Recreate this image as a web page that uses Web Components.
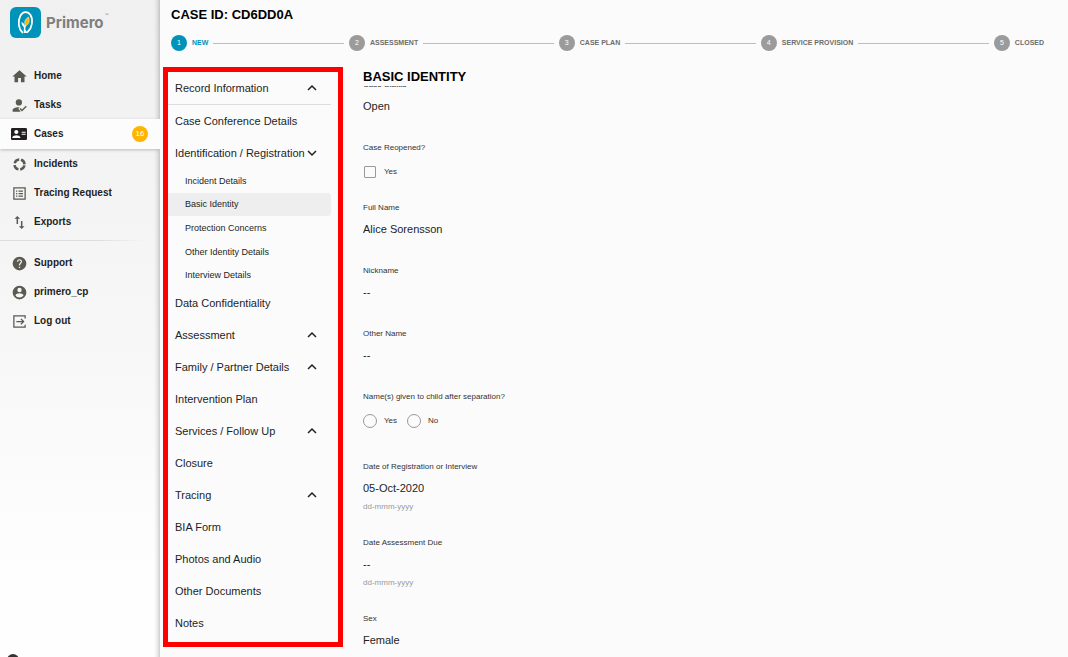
<!DOCTYPE html>
<html lang="en">
<head>
<meta charset="utf-8">
<meta name="viewport" content="width=device-width, initial-scale=1">
<title>Primero - Case CD6DD0A</title>
<style>
  body { margin: 0; background: #fbfbfb; color: #231e1f; font-family: "Liberation Sans", Arial, Helvetica, sans-serif; font-size: 11px; }
</style>
</head>
<body>
<primero-app></primero-app>

<script>
function define(name, html, setup) {
  const template = document.createElement('template');
  template.innerHTML = html;
  customElements.define(name, class extends HTMLElement {
    constructor() {
      super();
      this.attachShadow({ mode: 'open' }).append(template.content.cloneNode(true));
    }
    connectedCallback() { if (setup) setup(this, this.shadowRoot); }
  });
}

const icons = {
  home: '<path d="M9.700 21v-6.500h4.600V21H20v-9h3.500L12 1.800.5 12H4v9z"/>',
  tasks: '<circle cx="11" cy="7" r="5"/><path d="M13 20.5l-3-3 2-2.6C7 14.300 1 16.500 1 19v3h12.500zM22 12.500l-6 6-2.500-2.500-1.600 1.600 4.100 4.100 7.600-7.600z"/>',
  cases: '<path fill-rule="evenodd" d="M22 3H2C.9 3 0 3.900 0 5v14c0 1.100.9 2 2 2h20c1.100 0 2-.9 2-2V5c0-1.100-.9-2-2-2zM8 6c1.700 0 3 1.300 3 3s-1.300 3-3 3-3-1.300-3-3 1.300-3 3-3zm6 12H2v-1c0-2 4-3.100 6-3.100s6 1.100 6 3.100v1zm8-5h-6v-1.500h6V13zm0-3h-6V8.500h6V10z"/>',
  incidents: '<circle cx="12" cy="12" r="8" fill="none" stroke="currentColor" stroke-width="4" stroke-dasharray="9.570 3" stroke-dashoffset="-1.500"/>',
  tracing: '<path fill-rule="evenodd" d="M2 2h20v20H2zM4 4v16h16V4zM6.500 7h2v2h-2zM10.500 7h7v2h-7zM6.500 11h2v2h-2zM10.500 11h7v2h-7zM6.500 15h2v2h-2zM10.500 15h7v2h-7z"/>',
  exports: '<path d="M8.500 1.500L4 6h3.300v8.500h2.400V6H13zM16.700 18V9.500h-2.400V18H11l4.500 4.500L20 18z"/>',
  support: '<path d="M12 1a11 11 0 100 22 11 11 0 000-22zm1 18h-2v-2h2zm2.100-7.700l-.9.900C13.400 12.900 13 13.500 13 15h-2v-.5c0-1.100.4-2.100 1.200-2.800l1.200-1.300A2 2 0 1010 9H8a4 4 0 118 0c0 .9-.4 1.700-.9 2.300z"/>',
  user: '<path fill-rule="evenodd" d="M12 1a11 11 0 100 22 11 11 0 000-22zm0 3.500a3.500 3.500 0 110 7 3.500 3.500 0 010-7zm0 15.500c-2.700 0-5.200-1.400-6.500-3.600 0-2.200 4.400-3.400 6.500-3.400s6.500 1.200 6.500 3.400A7.600 7.600 0 0112 20z"/>',
  logout: '<path d="M2 2h20v5h-2V4H4v16h16v-3h2v5H2zM15 7l5 5-5 5-1.400-1.400L16.200 13H7v-2h9.200l-2.600-2.600z"/>'
};

define('primero-logo', `
<style>
  :host { display: flex; align-items: center; gap: 5px; color: #7f7f7e; }
  svg { width: 31px; height: 31px; }
  strong { font: 700 15px/20px Inter, sans-serif; }
  small { font: 4px/8px "Liberation Sans", sans-serif; align-self: flex-start; margin: 4px 0 0 -4px; }
</style>
<svg viewBox="0 0 31 31" aria-hidden="true">
  <rect width="31" height="31" rx="6" fill="#0093ba"/>
  <path d="M12.500 25.500C8.500 22 7.500 14 10.500 8.500 13 4 18 4 20.500 8c3 5 1.500 13-2.500 16.500-1.500 1.300-3 .8-3-.8" fill="none" stroke="#fff" stroke-width="1.700" stroke-linecap="round"/>
  <path d="M14.500 26c-.4-3.500.1-6.500 1.300-9" fill="none" stroke="#fff" stroke-width="1.500"/>
  <path d="M18.500 10c-4 2.500-4.500 5.500-3 9 3.500-2 4.500-5 3-9z" fill="#ffb500" stroke="#fff" stroke-width=".5"/>
  <path d="M11.500 15c.2 3 1.200 4.500 3.200 6 .5-3-.7-5-3.200-6z" fill="#fff"/>
</svg>
<strong>Primero</strong><small>™</small>`);

define('nav-entry', `
<style>
  :host { display: block; }
  a { display: flex; align-items: center; height: 29px; padding: 0 12px 0 11px; color: #231e1f; text-decoration: none; font-size: 10px; font-weight: bold; line-height: 12px; }
  svg { width: 15px; height: 15px; margin: 2px 7px 0 1px; fill: currentColor; color: #5a5a50; flex: none; }
  span { flex: 1; }
  :host([active]) a { height: 30px; background: #fcfcfc; box-shadow: 0 1px 3px #bbb; }
  :host([active]) svg { width: 16px; height: 16px; margin: 0 7px 0 0; color: #231e1f; }
</style>
<a href="#"><svg viewBox="0 0 24 24" aria-hidden="true"></svg><span><slot></slot></span><slot name="badge"></slot></a>`,
(host, root) => { root.querySelector('svg').innerHTML = icons[host.getAttribute('icon')]; });

define('count-badge', `
<style>
  :host { display: grid; place-items: center; width: 16px; height: 16px; border-radius: 50%; background: #ffb500; color: #fff; font-size: 8px; line-height: 16px; font-weight: normal; }
</style><slot></slot>`);

define('side-bar', `
<style>
  :host { display: flex; flex-direction: column; width: 160px; flex: none; overflow: hidden; background: linear-gradient(#f0f0f0, #f6f6f6 45%, #fefefe 88%); position: relative; }
  .edge { position: absolute; inset: 0 0 0 auto; width: 6px; background: linear-gradient(90deg, transparent, #00000010 50%, #00000030); }
  primero-logo { padding: 7px 10px 23px; }
  nav { display: block; }
  nav-entry[active] { position: relative; }
  hr { width: 100%; height: 1px; margin: 4px 0 7px; border: 0; background: linear-gradient(90deg, #ddd 60%, transparent 90%); }
  .more { margin: auto 0 -9px 7px; width: 12px; height: 12px; padding: 0; border: 0; border-radius: 50%; background: #333; flex: none; }
</style>
<div class="edge"></div>
<primero-logo></primero-logo>
<nav aria-label="Main">
  <nav-entry icon="home">Home</nav-entry>
  <nav-entry icon="tasks">Tasks</nav-entry>
  <nav-entry icon="cases" active>Cases<count-badge slot="badge">16</count-badge></nav-entry>
  <nav-entry icon="incidents">Incidents</nav-entry>
  <nav-entry icon="tracing">Tracing Request</nav-entry>
  <nav-entry icon="exports">Exports</nav-entry>
  <hr>
  <nav-entry icon="support">Support</nav-entry>
  <nav-entry icon="user">primero_cp</nav-entry>
  <nav-entry icon="logout">Log out</nav-entry>
</nav>
<button class="more" type="button" aria-label="More"></button>`);

define('flow-step', `
<style>
  :host { display: flex; align-items: center; gap: 5px; flex: 1 1 auto; color: #6d6d6d; }
  b { display: grid; place-items: center; width: 16px; height: 16px; border-radius: 50%; background: #9b9b9b; color: #fff; font-size: 7px; font-weight: normal; line-height: 16px; flex: none; }
  span { font-size: 7px; line-height: 10px; font-weight: bold; white-space: nowrap; }
  i { flex: 1; height: 1px; margin-right: 5px; background: #bdbdbd; }
  :host([current]) { color: #0093ba; }
  :host([current]) b { background: #0093ba; }
  :host([last]) { flex: none; }
  :host([last]) i { display: none; }
</style>
<b></b><span><slot></slot></span><i></i>`,
(host, root) => { root.querySelector('b').textContent = host.getAttribute('number'); });

define('work-flow', `
<style>:host { display: flex; } ::slotted(flow-step) { min-width: 0; }</style><slot></slot>`);

define('form-group', `
<style>
  :host { display: block; }
  button { display: flex; align-items: center; width: 100%; height: 32px; margin: 0; padding: 0 13px 0 7px; border: 0; background: none; color: #231e1f; font: inherit; font-size: 11px; line-height: 16px; text-align: left; white-space: nowrap; }
  svg { width: 12px; height: 12px; margin-left: auto; fill: none; stroke: #231e1f; stroke-width: 1.500; display: none; flex: none; }
  :host([state]) svg { display: block; }
  :host([state="open"]) svg { transform: rotate(180deg); }
  :host([divided]) { border-bottom: 1px solid #ddd; }
  .sub { display: grid; grid-auto-rows: 1fr; }
  :host([state="open"]) .sub { height: 118px; }
</style>
<button type="button"><span></span><svg viewBox="0 0 12 12" aria-hidden="true"><path d="M2 8l4-4 4 4"/></svg></button>
<div class="sub"><slot></slot></div>`,
(host, root) => { root.querySelector('span').textContent = host.getAttribute('label'); });

define('form-link', `
<style>
  :host { display: grid; }
  a { display: flex; align-items: center; padding-left: 17px; color: #231e1f; text-decoration: none; font-size: 9px; line-height: 12px; border-radius: 0 3px 3px 0; }
  :host([selected]) a { background: #eee; }
</style><a href="#"><slot></slot></a>`);

define('form-nav', `
<style>:host { display: block; box-sizing: border-box; width: 180px; flex: none; border: 5px solid #f00; padding: 0 7px 3px 0; }</style>
<nav aria-label="Forms">
  <form-group label="Record Information" state="closed" divided></form-group>
  <form-group label="Case Conference Details"></form-group>
  <form-group label="Identification / Registration" state="open">
    <form-link>Incident Details</form-link>
    <form-link selected>Basic Identity</form-link>
    <form-link>Protection Concerns</form-link>
    <form-link>Other Identity Details</form-link>
    <form-link>Interview Details</form-link>
  </form-group>
  <form-group label="Data Confidentiality"></form-group>
  <form-group label="Assessment" state="closed"></form-group>
  <form-group label="Family / Partner Details" state="closed"></form-group>
  <form-group label="Intervention Plan"></form-group>
  <form-group label="Services / Follow Up" state="closed"></form-group>
  <form-group label="Closure"></form-group>
  <form-group label="Tracing" state="closed"></form-group>
  <form-group label="BIA Form"></form-group>
  <form-group label="Photos and Audio"></form-group>
  <form-group label="Other Documents"></form-group>
  <form-group label="Notes"></form-group>
</nav>`);

define('text-field', `
<style>
  :host { display: block; padding-bottom: 28px; }
  .label { font-size: 8px; line-height: 12px; margin-bottom: 7px; color: #333; }
  .value { font-size: 11px; line-height: 16px; }
  .hint { display: none; font-size: 8px; line-height: 12px; margin-top: 5px; color: #999; }
  :host([hint]) { padding-bottom: 24px; }
  :host([hint]) .hint { display: block; }
</style>
<div class="label"></div><div class="value"><slot></slot></div><div class="hint"></div>`,
(host, root) => {
  root.querySelector('.label').textContent = host.getAttribute('label');
  root.querySelector('.hint').textContent = host.getAttribute('hint') || '';
});

define('choice-field', `
<style>
  :host { display: block; padding-bottom: 22px; }
  :host([type="radio"]) { padding-bottom: 32px; }
  fieldset { margin: 0; padding: 0; border: 0; }
  legend { padding: 0; margin-bottom: 10px; font-size: 8px; line-height: 12px; color: #333; }
  .options { display: flex; gap: 10px; }
  label { display: flex; align-items: center; gap: 7px; height: 16px; font-size: 8px; line-height: 12px; color: #333; }
  input { appearance: none; box-sizing: border-box; width: 14px; height: 14px; margin: 0; border: 1px solid #999; border-radius: 50%; }
  input[type="checkbox"] { width: 12px; height: 12px; margin: 0 1px; border-radius: 1px; }
</style>
<fieldset><legend></legend><div class="options"></div></fieldset>`,
(host, root) => {
  root.querySelector('legend').textContent = host.getAttribute('label');
  root.querySelector('.options').innerHTML = host.getAttribute('options').split(',')
    .map(o => `<label><input type="${host.getAttribute('type')}" name="choice">${o}</label>`).join('');
});

define('record-form', `
<style>
  :host { display: block; flex: 1; min-width: 0; }
  h2 { margin: 0; padding-top: 1px; font-size: 13px; line-height: 18px; color: #000; }
  .scroll { overflow: hidden; }
  .first { margin-top: -7px; }
</style>
<h2>BASIC IDENTITY</h2>
<div class="scroll">
  <text-field class="first" label="Case Status">Open</text-field>
  <choice-field type="checkbox" label="Case Reopened?" options="Yes"></choice-field>
  <text-field label="Full Name">Alice Sorensson</text-field>
  <text-field label="Nickname">--</text-field>
  <text-field label="Other Name">--</text-field>
  <choice-field type="radio" label="Name(s) given to child after separation?" options="Yes,No"></choice-field>
  <text-field label="Date of Registration or Interview" hint="dd-mmm-yyyy">05-Oct-2020</text-field>
  <text-field label="Date Assessment Due" hint="dd-mmm-yyyy">--</text-field>
  <text-field label="Sex">Female</text-field>
</div>`);

define('primero-app', `
<style>
  :host { display: flex; height: 100vh; overflow: hidden; }
  main { flex: 1; min-width: 0; }
  header { padding: 5px 24px 0 11px; }
  h1 { margin: 0 0 11px; font-size: 13px; line-height: 19px; color: #000; }
  .body { display: flex; align-items: flex-start; gap: 20px; padding: 16px 24px 0 3px; }
</style>
<side-bar></side-bar>
<main>
  <header>
    <h1>CASE ID: CD6DD0A</h1>
    <work-flow>
      <flow-step number="1" current>NEW</flow-step>
      <flow-step number="2">ASSESSMENT</flow-step>
      <flow-step number="3">CASE PLAN</flow-step>
      <flow-step number="4">SERVICE PROVISION</flow-step>
      <flow-step number="5" last>CLOSED</flow-step>
    </work-flow>
  </header>
  <div class="body"><form-nav></form-nav><record-form></record-form></div>
</main>`);
</script>
</body>
</html>
